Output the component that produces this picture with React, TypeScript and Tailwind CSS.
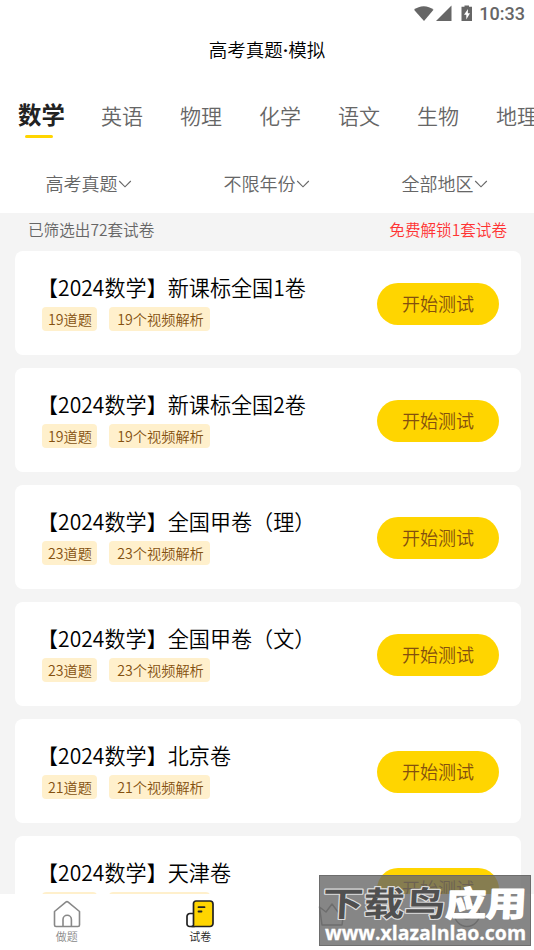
const subjects = ["数学", "英语", "物理", "化学", "语文", "生物", "地理"];

const filters = ["高考真题", "不限年份", "全部地区"];

const papers = [
  { title: "【2024数学】新课标全国1卷", count: 19 },
  { title: "【2024数学】新课标全国2卷", count: 19 },
  { title: "【2024数学】全国甲卷（理）", count: 23 },
  { title: "【2024数学】全国甲卷（文）", count: 23 },
  { title: "【2024数学】北京卷", count: 21 },
  { title: "【2024数学】天津卷", count: 20 },
];

function StatusBar() {
  return (
    <div className="flex h-[27px] shrink-0 items-center justify-end pr-[9px] text-[#666]">
      <svg width="60" height="20" viewBox="0 0 60 20" fill="currentColor">
        <path d="M2 5.700C7.500 1 16 1 21.500 5.700L12 17Z" />
        <path d="M39.500 1.500V17H24Z" />
        <path d="M49.500 2.700h3V1.500h4.500v1.200h3V17H49.500Z" />
        <path d="M56 5L52 10.800h2.300V15.500L58 9.300h-2.200Z" fill="#fff" />
      </svg>
      <span className="ml-[7px] font-['Roboto',sans-serif] text-[18px] font-medium leading-5">
        10:33
      </span>
    </div>
  );
}

function SubjectTabs() {
  return (
    <nav className="flex h-[74px] shrink-0 overflow-hidden pl-[18px] text-[21px] text-[#666]">
      {subjects.map((name, i) => (
        <div key={name} className="flex w-[79px] shrink-0 flex-col first:w-[83px]">
          {i === 0 ? (
            <>
              <span className="mt-[23px] text-[23.400px] font-bold leading-[34px] text-[#222]">
                {name}
              </span>
              <i className="ml-[7px] mt-[4px] h-[3px] w-7 rounded-full bg-[#ffd500]" />
            </>
          ) : (
            <span className="mt-[25px] leading-8">{name}</span>
          )}
        </div>
      ))}
    </nav>
  );
}

function FilterBar() {
  return (
    <div className="flex h-[65px] shrink-0 justify-around pt-[8px] text-[18px] leading-[54px] text-[#666]">
      {filters.map((name) => (
        <button key={name} type="button" className="flex h-[54px] w-[178px] items-center justify-center pr-px">
          {name}
          <svg className="mt-[2px]" width="14" height="10" viewBox="0 0 14 10" fill="none" stroke="currentColor" strokeWidth="1.1">
            <path d="M1.200 2L7 7.800L12.800 2" />
          </svg>
        </button>
      ))}
    </div>
  );
}

function PaperCard({ title, count }: { title: string; count: number }) {
  return (
    <article className="flex h-[104px] shrink-0 items-center justify-between rounded-lg bg-white pl-[27px] pr-[22px]">
      <div className="-mt-[3px]">
        <h2 className="-ml-[5px] whitespace-nowrap text-[21.100px] leading-[30px] text-black">{title}</h2>
        <div className="mt-[5px] flex gap-3 text-[14.200px] leading-6 text-[#84500f]">
          <span className="h-6 w-[55px] rounded-[4px] bg-[#fff0cc] pl-px text-center">{count}道题</span>
          <span className="h-6 w-[101px] rounded-[4px] bg-[#fff0cc] pl-[2px] text-center">
            {count}个视频解析
          </span>
        </div>
      </div>
      <button
        type="button"
        className="mt-px h-[42px] w-[122px] rounded-full bg-[#ffd500] text-[18px] text-[#84500f]"
      >
        开始测试
      </button>
    </article>
  );
}

function BottomNav() {
  return (
    <footer className="flex h-14 shrink-0 bg-white text-[11px] leading-4 text-[#888]">
      <div className="flex flex-1 flex-col items-center pt-[6px]">
        <svg width="28" height="28" viewBox="0 0 28 28" fill="none" stroke="currentColor" strokeWidth="1.600" strokeLinejoin="round">
          <path d="M1.500 11.500L12.800 2.200Q14 1.200 15.200 2.200L26.500 11.500V25Q26.500 26.500 25 26.500H3Q1.500 26.500 1.500 25Z" />
          <path d="M10 26V19.500a4.200 4.200 0 0 1 8.400 0V26" />
        </svg>
        <span>做题</span>
      </div>
      <div className="flex flex-1 flex-col items-center pt-[6px] text-[#222]">
        <svg width="28" height="28" viewBox="0 0 28 28" fill="none" stroke="#222" strokeWidth="1.700" strokeLinecap="round">
          <path d="M7.500 13.500H4a3 3 0 0 0-3 3V24a2.500 2.500 0 0 0 2.500 2.500H8" />
          <path d="M10 1H24a3 3 0 0 1 3 3V23.500a3 3 0 0 1-3 3H5.500A2 2 0 0 0 7.500 24V3.500A2.500 2.500 0 0 1 10 1Z" fill="#ffd500" />
          <path d="M12.500 7.200h6M12.500 11.500h3" strokeWidth="1.800" />
        </svg>
        <span>试卷</span>
      </div>
      <div className="flex flex-1 flex-col items-center pt-[6px]">
        <svg className="-ml-1" width="28" height="28" viewBox="0 0 28 28" fill="none" stroke="currentColor" strokeWidth="1.500" strokeLinejoin="round">
          <path d="M4 25L1.500 7L8 12L14 4L20 12L26.500 7L24 25Z" />
        </svg>
      </div>
      <div className="flex flex-1 flex-col items-center pt-[6px]">
        <svg width="28" height="28" viewBox="0 0 28 28" fill="none" stroke="currentColor" strokeWidth="1.500">
          <circle cx="14" cy="14" r="12.500" />
          <path d="M9 16c2 4 8 4 10 0" />
        </svg>
      </div>
    </footer>
  );
}

function Watermark() {
  return (
    <div className="absolute bottom-[4px] right-[3px] h-[71px] w-[212px] border border-[#666]/80 bg-[#656565]/79">
      <svg width="210" height="69" viewBox="0 0 210 69" fontFamily="'Noto Sans CJK SC', sans-serif" fontWeight="700">
        <g strokeLinejoin="round" paintOrder="stroke" transform="translate(0 40) skewX(-3)">
          <text x="2" y="0" fontSize="34" textLength="123" lengthAdjust="spacingAndGlyphs" fill="#505050" stroke="#ddd" strokeWidth="2.200">
            下载鸟
          </text>
          <text x="125" y="0" fontSize="34" textLength="81" lengthAdjust="spacingAndGlyphs" fill="#fff" stroke="#fff" strokeWidth="1.600">
            应用
          </text>
        </g>
        <text x="5" y="64" fontSize="20" fontFamily="'Open Sans', sans-serif" textLength="201" lengthAdjust="spacingAndGlyphs" fill="#fff" stroke="#fff" strokeWidth="0.3">
          www.xlazalnlao.com
        </text>
      </svg>
    </div>
  );
}

export default function App() {
  return (
    <div className="relative flex h-[950px] w-[534px] flex-col overflow-hidden bg-white font-['Noto_Sans_CJK_SC',sans-serif] font-[350]">
      <StatusBar />
      <h1 className="h-[47px] shrink-0 text-center text-[18.500px] leading-[45px] text-black">
        高考真题<span className="font-['Roboto',sans-serif] font-bold">·</span>模拟
      </h1>
      <SubjectTabs />
      <FilterBar />
      <main className="flex min-h-0 flex-1 flex-col overflow-hidden bg-[#f4f4f4]">
        <div className="flex h-[38px] shrink-0 justify-between pl-7 pr-[27px] text-[15.600px] leading-[32px] text-[#666]">
          <span>已筛选出72套试卷</span>
          <span className="text-[#ff3333]">免费解锁1套试卷</span>
        </div>
        <div className="flex flex-col gap-[13px] pl-[15px] pr-[13px]">
          {papers.map((paper) => (
            <PaperCard key={paper.title} {...paper} />
          ))}
        </div>
      </main>
      <BottomNav />
      <Watermark />
    </div>
  );
}
